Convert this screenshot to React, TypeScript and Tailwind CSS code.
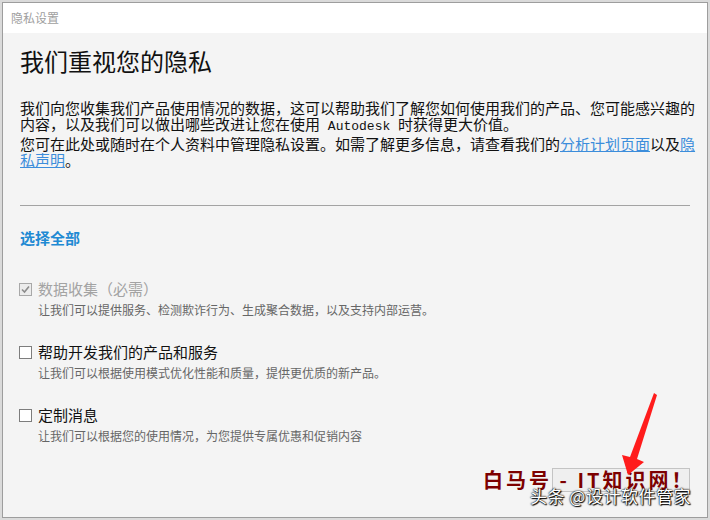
import React from "react";

const cjk = "'Noto Sans CJK SC', 'Noto Sans', sans-serif";

function Box({ checked, disabled }: { checked?: boolean; disabled?: boolean }) {
  return (
    <div
      className={
        "w-[13px] h-[13px] border flex items-center justify-center shrink-0 " +
        (disabled ? "border-[#a8a8a8] bg-[#ececec]" : "border-[#7d7d7d] bg-white")
      }
    >
      {checked && (
        <svg width="9" height="9" viewBox="0 0 9 9">
          <path d="M1 4.5 L3.5 7 L8 1.5" fill="none" stroke="#8c8c8c" strokeWidth="1.6" />
        </svg>
      )}
    </div>
  );
}

function Option({
  label,
  desc,
  checked,
  disabled,
}: {
  label: string;
  desc: string;
  checked?: boolean;
  disabled?: boolean;
}) {
  return (
    <div className="flex flex-col gap-[3px]">
      <div className="flex items-center h-[20px]">
        <div className="w-[18px] flex">
          <div className="-ml-[1px]">
            <Box checked={checked} disabled={disabled} />
          </div>
        </div>
        <span
          className={"text-[15px] leading-[20px] " + (disabled ? "text-[#a3a3a3]" : "text-[#111]")}
        >
          {label}
        </span>
      </div>
      <div className="pl-[18px] h-[16px] text-[12px] leading-[16px] text-[#666] whitespace-nowrap">{desc}</div>
    </div>
  );
}

const Line = ({ children, className = "" }: { children: React.ReactNode; className?: string }) => (
  <div className={"h-[16px] leading-[16px] whitespace-nowrap overflow-visible " + className}>{children}</div>
);

export default function App() {
  return (
    <div className="w-[710px] h-[520px] bg-[#dadada] relative overflow-hidden" style={{ fontFamily: cjk }}>
      <div className="absolute left-[2px] top-[2px] w-[706px] h-[516px] border border-[#9d9d9d] bg-[#f4f4f4] flex flex-col">
        <div className="h-[30px] bg-white flex items-center pl-[8px] text-[12px] text-[#a0a0a0] shrink-0">
          隐私设置
        </div>
        <div className="flex flex-col px-[17px]">
          <h1 className="mt-[14px] h-[28px] text-[24px] leading-[28px] text-[#111] font-normal">我们重视您的隐私</h1>
          <div className="mt-[25px] text-[15px] text-[#111] flex flex-col">
            <Line>我们向您收集我们产品使用情况的数据，这可以帮助我们了解您如何使用我们的产品、您可能感兴趣的</Line>
            <Line>
              内容，以及我们可以做出哪些改进让您在使用
              <span className="text-[13px] leading-[16px]" style={{ fontFamily: "'Liberation Mono', monospace" }}>
                {" "}Autodesk{" "}
              </span>
              时获得更大价值。
            </Line>
            <Line className="mt-[4px]">
              您可在此处或随时在个人资料中管理隐私设置。如需了解更多信息，请查看我们的
              <a className="text-[#3c8ddb] underline">分析计划页面</a>以及
              <a className="text-[#3c8ddb] underline">隐</a>
            </Line>
            <Line>
              <a className="text-[#3c8ddb] underline">私声明</a>。
            </Line>
          </div>
          <div className="mt-[37px] h-[1px] bg-[#a3a3a3]" />
          <div className="mt-[22px] h-[20px] text-[15px] leading-[20px] font-bold text-[#1f8ad3]">选择全部</div>
          <div className="mt-[31px] flex flex-col gap-[24px]">
            <Option
              label="数据收集（必需）"
              desc="让我们可以提供服务、检测欺诈行为、生成聚合数据，以及支持内部运营。"
              checked
              disabled
            />
            <Option label="帮助开发我们的产品和服务" desc="让我们可以根据使用模式优化性能和质量，提供更优质的新产品。" />
            <Option label="定制消息" desc="让我们可以根据您的使用情况，为您提供专属优惠和促销内容" />
          </div>
        </div>
      </div>

      {/* hidden button under watermark */}
      <div className="absolute left-[552px] top-[468px] w-[138px] h-[24px] bg-[#efefef] border border-[#c4c4c4]" />

      {/* watermark */}
      <div className="absolute left-[483px] top-[467px] text-[20px] leading-[26px] font-bold text-[#7d0000] whitespace-nowrap tracking-[3px]">
        白马号 - IT知识网！
      </div>
      <div className="absolute left-[530px] top-[485px] text-[17px] leading-[22px] text-white whitespace-nowrap tracking-[0.5px] [text-shadow:0_0_2px_#000,0_0_1px_#000,1px_1px_1px_#000]">
        头条 @设计软件管家
      </div>

      {/* red arrow */}
      <svg className="absolute left-0 top-0" width="710" height="520" viewBox="0 0 710 520">
        <polygon points="654,393 657,395 637,459 644,462 628,475 622,455 630,457" fill="#ff1c1c" />
      </svg>
    </div>
  );
}
